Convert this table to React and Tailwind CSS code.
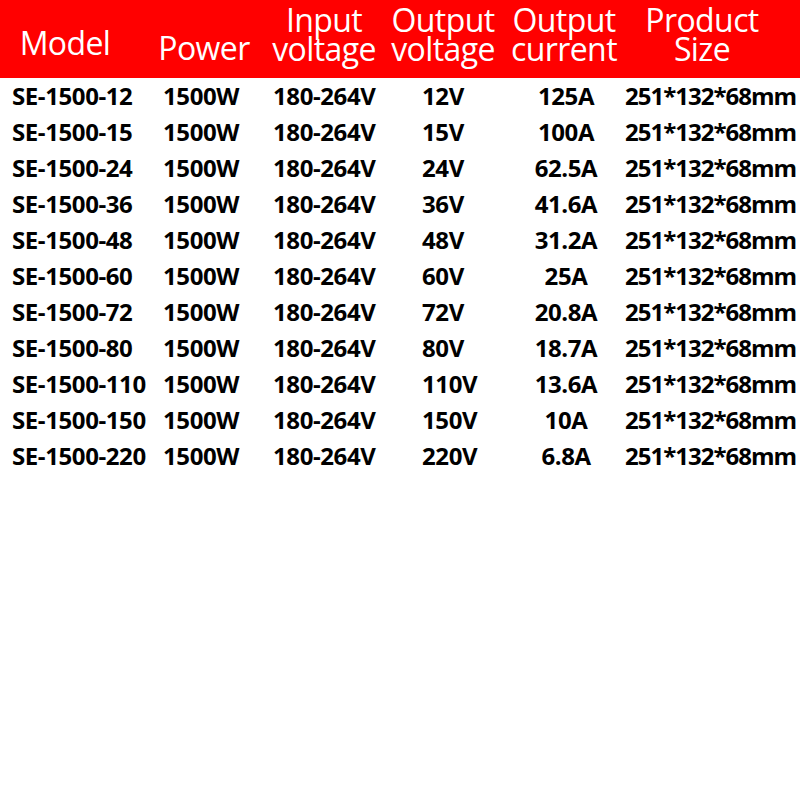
import React from "react";

const rows = [
  ["SE-1500-12", "12V", "125A"],
  ["SE-1500-15", "15V", "100A"],
  ["SE-1500-24", "24V", "62.5A"],
  ["SE-1500-36", "36V", "41.6A"],
  ["SE-1500-48", "48V", "31.2A"],
  ["SE-1500-60", "60V", "25A"],
  ["SE-1500-72", "72V", "20.8A"],
  ["SE-1500-80", "80V", "18.7A"],
  ["SE-1500-110", "110V", "13.6A"],
  ["SE-1500-150", "150V", "10A"],
  ["SE-1500-220", "220V", "6.8A"],
];

function HeadCell({ lines, w, ml, single }) {
  return (
    <div className={`flex flex-col items-center shrink-0 ${w} ${ml}`}>
      {single ? (
        <div className="mt-[33px] leading-[29px]">{lines[0]}</div>
      ) : (
        <>
          <div className="mt-[5px] leading-[29px]">{lines[0]}</div>
          <div className="leading-[29px]">{lines[1]}</div>
        </>
      )}
    </div>
  );
}

export default function App() {
  return (
    <div
      className="w-[800px] h-[800px] bg-white overflow-hidden"
      style={{ fontFamily: '"Open Sans", "Noto Sans", sans-serif' }}
    >
      <div className="h-[78px] bg-[#ff0000] text-white text-[32px] tracking-[-0.6px] flex whitespace-nowrap">
        <div className="flex flex-col items-center shrink-0 w-[130px]">
          <div className="mt-[28px] leading-[29px]">Model</div>
        </div>
        <HeadCell lines={["Power"]} single w="w-[128px]" ml="ml-[10px]" />
        <HeadCell lines={["Input", "voltage"]} w="w-[110px]" ml="ml-[1px]" />
        <HeadCell lines={["Output", "voltage"]} w="w-[110px]" ml="ml-[9px]" />
        <HeadCell lines={["Output", "current"]} w="w-[110px]" ml="ml-[11px]" />
        <HeadCell lines={["Product", "Size"]} w="w-[112px]" ml="ml-[27px]" />
      </div>
      <div className="flex flex-col text-black font-bold text-[24px] tracking-[-0.4px] whitespace-nowrap">
        {rows.map((r) => (
          <div key={r[0]} className="flex h-[36px] items-center">
            <div className="w-[151px] pl-[12px] shrink-0">{r[0]}</div>
            <div className="w-[110px] pl-[12px] shrink-0">1500W</div>
            <div className="w-[139px] pl-[12px] shrink-0">180-264V</div>
            <div className="w-[110px] pl-[22px] shrink-0">{r[1]}</div>
            <div className="w-[112px] text-center shrink-0">{r[2]}</div>
            <div className="pl-[3px] shrink-0 tracking-[-1px]">251*132*68mm</div>
          </div>
        ))}
      </div>
    </div>
  );
}
